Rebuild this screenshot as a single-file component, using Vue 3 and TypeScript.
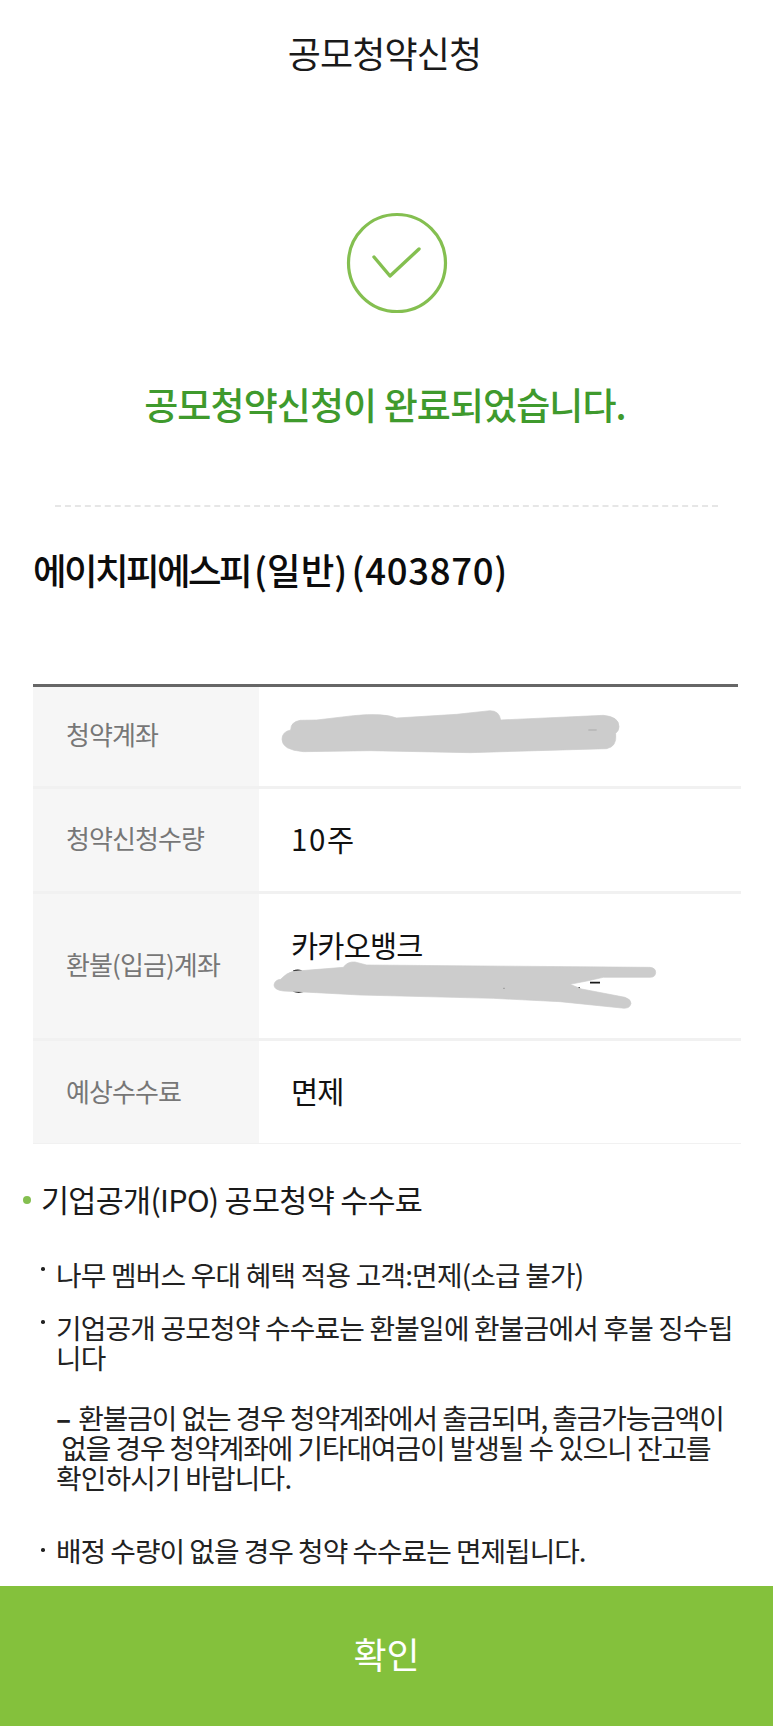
<script setup lang="ts">
interface Row { label: string; value: string[]; h: number; cls: string; scribble?: 'a' | 'b' }
const rows: Row[] = [
  { label: '청약계좌', value: [], h: 102, cls: 'r1', scribble: 'a' },
  { label: '청약신청수량', value: ['10주'], h: 105, cls: 'r2' },
  { label: '환불(입금)계좌', value: ['카카오뱅크'], h: 147, cls: 'r3', scribble: 'b' },
  { label: '예상수수료', value: ['면제'], h: 103, cls: 'r4' },
]
</script>

<template>
  <div class="page">
    <header class="title">공모청약신청</header>
    <div class="hero">
      <svg class="check" width="104" height="104" viewBox="0 0 104 104" aria-hidden="true">
        <circle cx="52" cy="52" r="48.5" fill="none" stroke="#84bf50" stroke-width="3.2" />
        <path d="M29 46 L45 65 L74 38" fill="none" stroke="#84bf50" stroke-width="3.4" stroke-linecap="round" stroke-linejoin="round" />
      </svg>
      <p class="done">공모청약신청이 완료되었습니다.</p>
    </div>
    <div class="dash"></div>
    <h1 class="name"><span class="name-kr">에이치피에스피</span> <span class="name-paren">(일반)</span> <span class="name-num">(403870)</span></h1>
    <div class="rule"></div>
    <div class="table">
      <div v-for="row in rows" :key="row.label" class="row" :class="row.cls" :style="{ height: row.h + 'px' }">
        <div class="th">{{ row.label }}</div>
        <div class="td">
          <div v-for="v in row.value" :key="v">{{ v }}</div>
          <svg v-if="row.scribble === 'a'" class="scrib a" width="360" height="60" viewBox="0 0 1080 180" aria-hidden="true">
            <path d="M62 90 Q62 66 90 61 L140 60 L250 47 Q340 38 380 54 L560 43 L660 32 Q688 32 692 60 L1000 46 Q1047 50 1047 80 Q1047 92 1037 100 Q1042 140 1010 146 L800 152 L600 158 L300 152 L100 155 Q36 150 36 118 Q36 95 62 90 Z" fill="#cccccc" stroke="#cccccc" stroke-width="2" stroke-linejoin="round" />
            <path d="M955 90 h25" stroke="#aaaaaa" stroke-width="3" />
          </svg>
          <svg v-if="row.scribble === 'b'" class="scrib b" width="400" height="110" viewBox="0 0 1200 330" aria-hidden="true">
            <path d="M990 188 h30 M957 201 v7 M900 197 l30 5 M100 154 q12 -6 25 -1 M100 213 q15 6 30 1" fill="none" stroke="#1a1a1a" stroke-width="5" />
            <path d="M42 195 Q44 180 62 178 Q80 158 100 154 L250 142 Q262 124 285 126 L320 135 L1170 142 Q1187 144 1187 157 Q1187 172 1170 172 L1030 172 L985 182 L930 193 L965 207 L1095 232 Q1113 238 1113 250 Q1110 268 1085 264 L900 245 L700 235 L300 225 L170 218 L70 213 Q42 210 42 195 Z" fill="#cccccc" stroke="#cccccc" stroke-width="2" stroke-linejoin="round" />
            <path d="M730 205 h4" stroke="#888888" stroke-width="3" />
          </svg>
        </div>
      </div>
    </div>
    <section class="notes">
      <h2 class="notes-head"><span class="green-dot"></span>기업공개(IPO) 공모청약 수수료</h2>
      <ul class="list">
        <li class="first">나무 멤버스 우대 혜택 적용 고객:면제(소급 불가)</li>
        <li class="second">기업공개 공모청약 수수료는 환불일에 환불금에서 후불 징수됩<br />니다</li>
        <li class="plain"><span class="tight"><span class="minus">–</span> 환불금이 없는 경우 청약계좌에서 출금되며, 출금가능금액이<br />&nbsp;없을 경우 청약계좌에 기타대여금이 발생될 수 있으니 잔고를</span><br />확인하시기 바랍니다.</li>
        <li class="last">배정 수량이 없을 경우 청약 수수료는 면제됩니다.</li>
      </ul>
    </section>
    <button class="ok" type="button"><span>확인</span></button>
  </div>
</template>

<style>
html, body { margin: 0; padding: 0; background: #fff; }
</style>

<style scoped>
.page {
  width: 773px;
  height: 1726px;
  display: flex;
  flex-direction: column;
  background: #fff;
  color: #111;
  font-family: "Noto Sans CJK KR", "Noto Sans", sans-serif;
  overflow: hidden;
}
.title {
  height: 104px;
  line-height: 104px;
  text-align: center;
  padding-right: 4px;
  font-size: 36px;
  letter-spacing: -0.9px;
  color: #1a1a1a;
}
.hero {
  height: 401px;
  display: flex;
  flex-direction: column;
  align-items: center;
  padding-top: 107px;
  box-sizing: border-box;
}
.check { display: block; margin-left: 21px; }
.done {
  margin: 64px 3px 0 0;
  font-size: 37px;
  font-weight: 500;
  line-height: 50px;
  letter-spacing: -0.9px;
  color: #3f9a2d;
}
.dash {
  margin: 0 55px;
  height: 0;
  border-top: 2px dashed #e6e6e6;
}
.name {
  margin: 38px 0 0 33px;
  font-size: 36.5px;
  line-height: 50px;
  font-weight: 500;
  word-spacing: -4px;
  color: #0c0c0c;
}
.name-kr { letter-spacing: -2.6px; }
.name-paren { letter-spacing: 0; }
.name-num { letter-spacing: 0.7px; }
.rule {
  margin: 89px 35px 0 33px;
  height: 3px;
  background: #666;
}
.table { margin: 0 32px 0 33px; }
.row {
  display: flex;
  box-sizing: border-box;
  border-bottom: 3px solid #f1f1f1;
}
.row.r4 { border-bottom-width: 1px; }
.th {
  width: 226px;
  flex: none;
  background: #f6f6f6;
  padding: 0 0 6px 33px;
  box-sizing: border-box;
  display: flex;
  align-items: center;
  font-size: 26px;
  letter-spacing: -0.9px;
  color: #777;
}
.r4 .th { padding-bottom: 4px; }
.td {
  position: relative;
  flex: 1;
  padding: 0 0 5px 32px;
  display: flex;
  flex-direction: column;
  justify-content: center;
  font-size: 29.5px;
  letter-spacing: -0.8px;
  color: #111;
}
.r2 .td { letter-spacing: 1.6px; }
.r3 .td { justify-content: flex-start; padding: 30px 0 0 32px; line-height: 40px; }
.r4 .td { padding-bottom: 4px; }
.scrib { position: absolute; display: block; }
.scrib.a { left: 11px; top: 13px; }
.scrib.b { left: 1px; top: 26px; }
.notes { padding: 0 0 0 23px; margin-top: 35px; }
.notes-head {
  margin: 0;
  display: flex;
  align-items: center;
  font-size: 30.5px;
  line-height: 40px;
  font-weight: 400;
  letter-spacing: -0.7px;
  color: #1a1a1a;
}
.green-dot {
  width: 8px;
  height: 8px;
  border-radius: 50%;
  background: #84bf50;
  margin: 2px 10px 0 0;
  flex: none;
}
.list {
  list-style: none;
  margin: 40px 0 0;
  padding: 0 0 0 33px;
  font-size: 27.8px;
  line-height: 30px;
  letter-spacing: -0.8px;
  color: #222;
}
.list li { position: relative; white-space: nowrap; }
.list li:not(.plain)::before {
  content: "";
  position: absolute;
  left: -15px;
  top: 8px;
  width: 3.5px;
  height: 3.5px;
  border-radius: 50%;
  background: #222;
}
.list li.last::before { top: 13px; }
.second { margin-top: 23px; }
.plain { margin-top: 30px; }
.tight { letter-spacing: -1.05px; }
.minus { font-weight: 700; margin-right: 3px; }
.last { margin-top: 43px; letter-spacing: -1px; }
.ok {
  margin-top: auto;
  height: 140px;
  flex: none;
  border: 0;
  padding: 0 0 6px;
  width: 100%;
  background: #84c13c;
  color: #fff;
  font-family: inherit;
  font-size: 36px;
}
</style>
